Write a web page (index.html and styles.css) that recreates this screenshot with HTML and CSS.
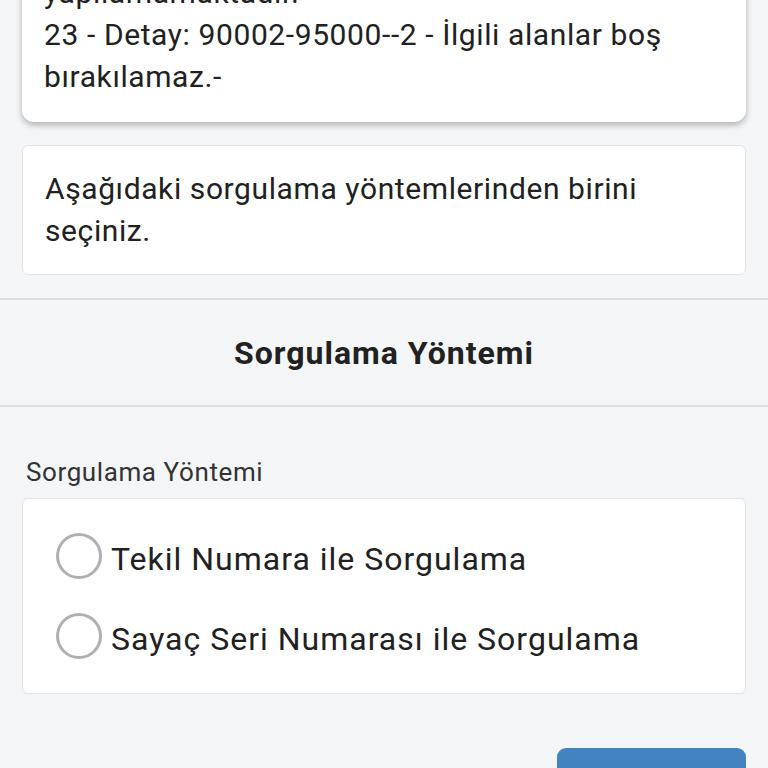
FILE: index.html
```html
<!DOCTYPE html>
<html lang="tr">
<head>
<meta charset="utf-8">
<title>Sorgulama</title>
<link rel="stylesheet" href="styles.css">
</head>
<body>
<div class="page">
  <div class="wrap">
    <div class="alert-card">
      <p>yapılamamaktadır.<br>23 - Detay: 90002-95000--2 - İlgili alanlar boş bırakılamaz.-</p>
    </div>
    <div class="info-card">
      <p>Aşağıdaki sorgulama yöntemlerinden birini seçiniz.</p>
    </div>
  </div>
  <div class="section-title">Sorgulama Yöntemi</div>
  <div class="wrap">
    <div class="field-label">Sorgulama Yöntemi</div>
    <div class="radio-card">
      <label class="radio-row"><span class="radio"></span><span class="radio-text">Tekil Numara ile Sorgulama</span></label>
      <label class="radio-row"><span class="radio"></span><span class="radio-text">Sayaç Seri Numarası ile Sorgulama</span></label>
    </div>
    <div class="actions">
      <button class="btn" type="button"></button>
    </div>
  </div>
</div>
</body>
</html>
```

FILE: styles.css
```css
html, body {
  margin: 0;
  padding: 0;
  background: #f4f5f7;
  font-family: Roboto, "Noto Sans", sans-serif;
  color: #212121;
  overflow: hidden;
}
.page {
  width: 768px;
  height: 768px;
  overflow: hidden;
}
.wrap {
  padding: 0 22px;
}
p {
  margin: 0;
}
.alert-card {
  margin-top: -50px;
  background: #fff;
  border-radius: 12px;
  box-shadow: 0 3px 6px rgba(0, 0, 0, 0.28);
  padding: 22px 50px 24px 22px;
  font-size: 30px;
  letter-spacing: 0.6px;
  line-height: 42px;
}
.info-card {
  margin-top: 23px;
  background: #fff;
  border: 1px solid #e2e3e6;
  border-radius: 6px;
  padding: 22px 50px 22px 22px;
  font-size: 30px;
  letter-spacing: 0.6px;
  line-height: 42px;
}
.section-title {
  margin-top: 23px;
  border-top: 2px solid #dfe0e3;
  border-bottom: 2px solid #dfe0e3;
  height: 105px;
  display: flex;
  align-items: center;
  justify-content: center;
  font-size: 32px;
  letter-spacing: 1px;
  font-weight: 700;
}
.field-label {
  padding: 50px 0 0 4px;
  height: 41px;
  font-size: 26px;
  letter-spacing: 0.6px;
  color: #333;
}
.radio-card {
  background: #fff;
  border: 1px solid #e2e3e6;
  border-radius: 6px;
  padding: 17px 22px 17px 33px;
  display: flex;
  flex-direction: column;
}
.radio-row {
  display: flex;
  align-items: center;
  gap: 9px;
  height: 80px;
}
.radio {
  width: 40px;
  height: 40px;
  border: 3px solid #afafaf;
  border-radius: 50%;
  flex: none;
}
.radio-text {
  font-size: 32px;
  letter-spacing: 1px;
  padding-top: 6px;
}
.actions {
  display: flex;
  justify-content: flex-end;
  margin-top: 54px;
}
.btn {
  width: 189px;
  height: 60px;
  border: none;
  border-radius: 9px;
  background: #4383c0;
}
```
